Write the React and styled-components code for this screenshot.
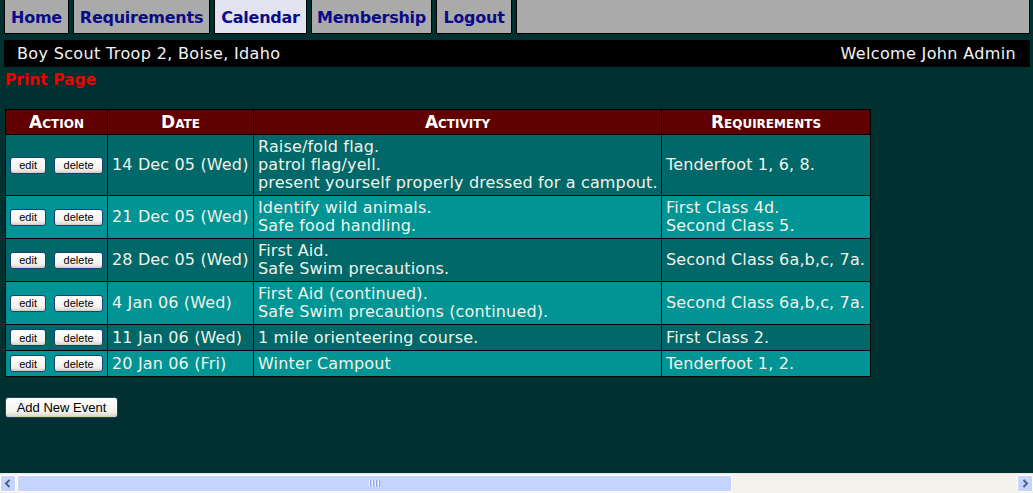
import styled, { createGlobalStyle } from "styled-components";

const GlobalStyle = createGlobalStyle`
  html, body {
    margin: 0;
    padding: 0;
    overflow: hidden;
    background: #003030;
  }
`;

const Page = styled.div`
  display: flex;
  flex-direction: column;
  width: 1033px;
  height: 493px;
  background: #003030;
  font-family: "DejaVu Sans", Verdana, sans-serif;
`;

const Main = styled.div`
  flex: 1;
  padding: 0 3px 0 4px;
`;

const Nav = styled.div`
  display: flex;
  gap: 4px;
  height: 34px;
`;

const Tab = styled.div`
  width: ${(p) => p.$w}px;
  flex: ${(p) => (p.$fill ? 1 : "none")};
  display: flex;
  align-items: center;
  justify-content: center;
  box-sizing: border-box;
  padding-top: 1px;
  border: 1px solid #000;
  border-top: none;
  background: ${(p) => (p.$active ? "#e2e2f0" : "#aaaaaa")};
  color: #0b0b8a;
  font-weight: bold;
  font-size: 16px;
  letter-spacing: -0.25px;
`;

const Banner = styled.div`
  display: flex;
  justify-content: space-between;
  align-items: center;
  margin-top: 6px;
  height: 27px;
  padding: 0 14px 0 13px;
  background: #000;
  color: #f4f4f4;
  font-size: 16px;
  letter-spacing: 0.35px;
`;

const PrintLink = styled.div`
  color: #f00000;
  font-weight: bold;
  font-size: 15.5px;
  padding: 4px 0 0 1px;
  height: 18px;
`;

const Table = styled.table`
  margin: 20px 0 0 1px;
  border-collapse: collapse;
  table-layout: fixed;
  width: 866px;
  border: 1px solid #000;
  color: #f2f2ea;
  font-size: 16px;
  letter-spacing: 0.15px;
`;

const Col = styled.col`
  width: ${(p) => p.$w}px;
`;

const Th = styled.th`
  height: 24px;
  padding: 0;
  background: #600000;
  border: 1px solid #000;
  font-variant: small-caps;
  font-weight: bold;
  font-size: 17px;
  letter-spacing: 0;
  color: #fff;
  text-align: center;
`;

const Row = styled.tr`
  background: ${(p) => (p.$alt ? "#009494" : "#006868")};
`;

const Td = styled.td`
  border: 1px solid #000;
  padding: 3px 4px;
  line-height: 18px;
  vertical-align: middle;
  white-space: nowrap;
  overflow: hidden;
`;

const Actions = styled.div`
  display: flex;
  align-items: center;
  height: 19px;
  gap: 8px;
`;

const XpButton = styled.button`
  box-sizing: border-box;
  height: ${(p) => p.$h || 17}px;
  width: ${(p) => p.$w}px;
  padding: 0;
  border: 1px solid #1c3f7a;
  border-radius: 3px;
  background: linear-gradient(#ffffff, #f4f3ee 70%, #d8d5c8);
  font-family: "Liberation Sans", Arial, sans-serif;
  font-size: ${(p) => p.$size || 11}px;
  letter-spacing: 0;
  color: #000;
  box-shadow: inset 0 -1px 0 #d6d0c0;
`;

const AddWrap = styled.div`
  margin: 20px 0 0 1px;
`;

const Scrollbar = styled.div`
  display: flex;
  height: 20px;
  background: #f4f2ea;
  border-top: 1px solid #eae8e0;
  box-sizing: border-box;
  padding: 1px 0;
`;

const Arrow = styled.div`
  width: 16px;
  height: 17px;
  display: flex;
  align-items: center;
  justify-content: center;
  border: 1px solid #fff;
  border-radius: 2px;
  background: #c4d4fc;
  box-sizing: border-box;
  margin: ${(p) => (p.$right ? "0 0 0 auto" : "0")};
`;

const Thumb = styled.div`
  width: 715px;
  height: 17px;
  box-sizing: border-box;
  border: 1px solid #fff;
  border-radius: 2px;
  background: #c4d4fc;
  margin-left: 1px;
  display: flex;
  align-items: center;
  justify-content: center;
  gap: 1px;
`;

const Grip = styled.span`
  width: 1px;
  height: 7px;
  background: #eef3ff;
  border-right: 1px solid #8ca5e6;
`;

const events = [
  {
    date: "14 Dec 05 (Wed)",
    activity: ["Raise/fold flag.", "patrol flag/yell.", "present yourself properly dressed for a campout."],
    req: ["Tenderfoot 1, 6, 8."],
  },
  {
    date: "21 Dec 05 (Wed)",
    activity: ["Identify wild animals.", "Safe food handling."],
    req: ["First Class 4d.", "Second Class 5."],
  },
  {
    date: "28 Dec 05 (Wed)",
    activity: ["First Aid.", "Safe Swim precautions."],
    req: ["Second Class 6a,b,c, 7a."],
  },
  {
    date: "4 Jan 06 (Wed)",
    activity: ["First Aid (continued).", "Safe Swim precautions (continued)."],
    req: ["Second Class 6a,b,c, 7a."],
  },
  {
    date: "11 Jan 06 (Wed)",
    activity: ["1 mile orienteering course."],
    req: ["First Class 2."],
  },
  {
    date: "20 Jan 06 (Fri)",
    activity: ["Winter Campout"],
    req: ["Tenderfoot 1, 2."],
  },
];

const tabs = [
  { label: "Home", w: 65 },
  { label: "Requirements", w: 137 },
  { label: "Calendar", w: 93, active: true },
  { label: "Membership", w: 121 },
  { label: "Logout", w: 76 },
];

function Lines({ items }) {
  return items.map((t, i) => (
    <div key={i}>{t}</div>
  ));
}

export default function App() {
  return (
    <Page>
      <GlobalStyle />
      <Main>
        <Nav>
          {tabs.map((t) => (
            <Tab key={t.label} $w={t.w} $active={t.active}>
              {t.label}
            </Tab>
          ))}
          <Tab $fill />
        </Nav>
        <Banner>
          <span>Boy Scout Troop 2, Boise, Idaho</span>
          <span>Welcome John Admin</span>
        </Banner>
        <PrintLink>Print Page</PrintLink>
        <Table>
          <colgroup>
            <Col $w={102} />
            <Col $w={146} />
            <Col $w={408} />
            <Col $w={209} />
          </colgroup>
          <thead>
            <tr>
              <Th>Action</Th>
              <Th>Date</Th>
              <Th>Activity</Th>
              <Th>Requirements</Th>
            </tr>
          </thead>
          <tbody>
            {events.map((e, i) => (
              <Row key={e.date} $alt={i % 2 === 1}>
                <Td>
                  <Actions>
                    <XpButton $w={37}>edit</XpButton>
                    <XpButton $w={50}>delete</XpButton>
                  </Actions>
                </Td>
                <Td>{e.date}</Td>
                <Td>
                  <Lines items={e.activity} />
                </Td>
                <Td>
                  <Lines items={e.req} />
                </Td>
              </Row>
            ))}
          </tbody>
        </Table>
        <AddWrap>
          <XpButton $w={113} $h={21} $size={13}>
            Add New Event
          </XpButton>
        </AddWrap>
      </Main>
      <Scrollbar>
        <Arrow>
          <svg width="8" height="9" viewBox="0 0 8 9">
            <path d="M5.5 1 L2 4.5 L5.5 8" fill="none" stroke="#4d6185" strokeWidth="2" />
          </svg>
        </Arrow>
        <Thumb>
          <Grip />
          <Grip />
          <Grip />
          <Grip />
        </Thumb>
        <Arrow $right>
          <svg width="8" height="9" viewBox="0 0 8 9">
            <path d="M2.5 1 L6 4.5 L2.5 8" fill="none" stroke="#4d6185" strokeWidth="2" />
          </svg>
        </Arrow>
      </Scrollbar>
    </Page>
  );
}
